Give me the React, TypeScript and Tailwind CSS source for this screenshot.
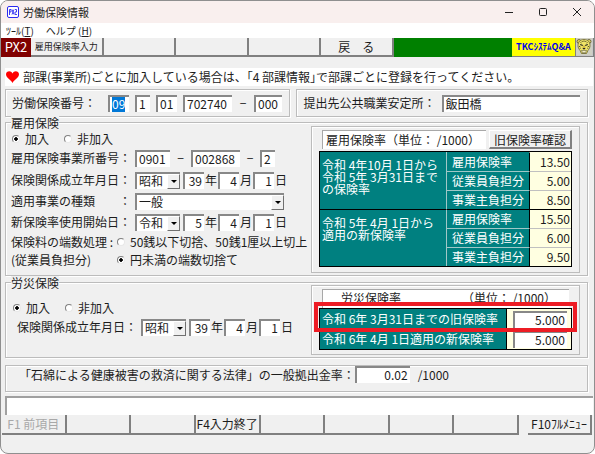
import { useEffect, useRef } from "react";
import type { ReactNode } from "react";

const boxStyle = "h-[17px] border-t-2 border-l-2 border-[#888888] bg-white px-[2px] text-[12px] leading-[14px] outline-none rounded-none"

function Field({ label, value, className }: { label: string, value: string, className: string }) {
    return <input aria-label={label} defaultValue={value} className={`${boxStyle} pb-[2px] ${className}`} />
}

function Combo({ label, options, className }: { label: string, options: string[], className: string }) {
    return (
        <div className={`relative ${className}`}>
            <select aria-label={label} className={`${boxStyle} block w-full appearance-none`}>
                {options.map((o) => <option key={o}>{o}</option>)}
            </select>
            <span className="pointer-events-none absolute top-[2px] right-0 flex h-[15px] w-[13px] items-center justify-center border border-t-white border-l-white border-r-[#707070] border-b-[#707070] bg-[#f0f0f0]">
                <svg width="6" height="3" viewBox="0 0 6 3"><path d="M0 0h6L3 3z" fill="#000" /></svg>
            </span>
        </div>
    )
}

function Radio({ name, label, checked }: { name: string, label: string, checked?: boolean }) {
    return (
        <label className="flex items-center gap-[5px] whitespace-nowrap">
            <input
                type="radio"
                name={name}
                defaultChecked={checked}
                className="h-[8px] w-[8px] shrink-0 appearance-none rounded-full border border-t-[#808080] border-l-[#808080] border-r-[#e8e8e8] border-b-[#e8e8e8] bg-white checked:bg-[radial-gradient(circle,#000_0_1.5px,#fff_2px)]"
            />
            {label}
        </label>
    )
}

function DateRow({ label, era, year, month, day }: { label: string, era: string, year: string, month: string, day: string }) {
    return (
        <div className="flex h-[20px] items-center">
            <span className="w-[124px] shrink-0">{label}：</span>
            <Combo label={`${label} 元号`} options={[era, era === "昭和" ? "平成" : "昭和"]} className="w-[45px]" />
            <Field label={`${label} 年`} value={year} className="ml-[3px] w-[21px] text-right" />
            <span className="w-[14px] text-center">年</span>
            <Field label={`${label} 月`} value={month} className="w-[21px] text-right" />
            <span className="w-[14px] text-center">月</span>
            <Field label={`${label} 日`} value={day} className="w-[21px] text-right" />
            <span className="w-[14px] text-center">日</span>
        </div>
    )
}

function Group({ title, className, children }: { title?: string, className: string, children: ReactNode }) {
    return (
        <fieldset className={`relative min-w-0 border border-[#bcbcbc] shadow-[inset_1px_1px_0_#fff,1px_1px_0_#fff] ${className}`}>
            {title && <legend className="absolute top-[-7px] left-[5px] bg-[#f0f0f0] leading-[14px]">{title}</legend>}
            {children}
        </fieldset>
    )
}

const rates = [
    {
        title: ["令和 4年10月 1日から", "令和 5年 3月31日まで", "の保険率"],
        rows: [["雇用保険率", "13.50"], ["従業員負担分", "5.00"], ["事業主負担分", "8.50"]],
    },
    {
        title: ["令和 5年 4月 1日から", "適用の新保険率"],
        rows: [["雇用保険率", "15.50"], ["従業員負担分", "6.00"], ["事業主負担分", "9.50"]],
    },
]

const accidentRates = [
    ["令和 6年 3月31日までの旧保険率", "5.000"],
    ["令和 6年 4月 1日適用の新保険率", "5.000"],
]

const toolButton = "flex-[72] min-w-0 border-r-2 border-b-2 border-[#808080] bg-[#f0f0f0] whitespace-nowrap"

function Leopard() {
    return (
        <svg width="16" height="17" viewBox="0 0 16 17" aria-hidden="true">
            <rect width="16" height="17" fill="#d0d0c4" />
            <circle cx="3" cy="3.500" r="2" fill="#e8d860" stroke="#55512d" strokeWidth=".8" />
            <circle cx="13" cy="3.500" r="2" fill="#e8d860" stroke="#55512d" strokeWidth=".8" />
            <path d="M8 1.500c4 0 6 2.500 6 6 0 2-.8 3.500-2 4.800L10.500 15.500h-5L4 12.300C2.800 11 2 9.500 2 7.500c0-3.500 2-6 6-6z" fill="#f0e468" stroke="#6b6530" strokeWidth=".8" />
            <path d="M8 2.500v1.500M6 3l.5 1M10 3l-.5 1M4.500 4.500l1 .5M11.500 4.500l-1 .5M3 8.500h1.200M13 8.500h-1.200M3.800 10.500l1-.5M12.200 10.500l-1-.5" stroke="#4d4823" strokeWidth=".9" />
            <path d="M4.200 6.500l2.600 1M11.800 6.500l-2.600 1" stroke="#222" strokeWidth="1.200" />
            <path d="M7 7.500h2l.5 2.500h-3z" fill="#d2b83f" />
            <path d="M6.300 10h3.400L8 11.800z" fill="#222" />
            <path d="M5.500 12.300l2.500.4 2.500-.4-1 2.400h-3z" fill="#fff8d0" stroke="#554" strokeWidth=".6" />
        </svg>
    )
}

export default function App() {
    const firstField = useRef<HTMLInputElement>(null)

    useEffect(() => {
        firstField.current?.focus()
        firstField.current?.select()
    }, [])

    return (
        <div className="flex min-h-screen w-full flex-col overflow-hidden rounded-lg border border-[#8f8f8f] bg-[#f0f0f0] font-['Noto_Sans_CJK_JP',sans-serif] text-[12px] leading-[14px] text-[#1c1c1c]">
            <header className="flex h-[22px] items-center bg-[#f9efee] pl-[6px]">
                <svg width="12" height="12" viewBox="0 0 12 12" aria-hidden="true">
                    <rect x=".5" y=".5" width="11" height="11" rx="1.5" fill="#fff" stroke="#2a2af0" />
                    <path d="M2.500 9V3.500h1.500v2.500h-1.500M5 3.500l2 5M7 3.500l-2 5M8 3.500h1.500v2.500h-1.500v2.500h2" fill="none" stroke="#2a2af0" strokeWidth=".9" />
                </svg>
                <h1 className="ml-[4px] flex-1 text-[11px]">労働保険情報</h1>
                <button aria-label="最小化" className="flex w-[34px] justify-center">
                    <svg width="8" height="8" viewBox="0 0 8 8"><path d="M0 4.500h8" stroke="#222" /></svg>
                </button>
                <button aria-label="最大化" className="flex w-[34px] justify-center">
                    <svg width="8" height="8" viewBox="0 0 8 8"><rect x=".5" y=".5" width="7" height="7" rx="1" fill="none" stroke="#222" /></svg>
                </button>
                <button aria-label="閉じる" className="flex w-[34px] justify-center">
                    <svg width="8" height="8" viewBox="0 0 8 8"><path d="M0 0l8 8M8 0L0 8" stroke="#222" /></svg>
                </button>
            </header>

            <nav className="flex h-[15px] items-center gap-[12px] bg-white pl-[5px] text-[10px]">
                <button>ﾂｰﾙ(<u>T</u>)</button>
                <button>ヘルプ (<u>H</u>)</button>
            </nav>

            <div className="flex h-[19px] text-[12px]">
                <span className="w-[30px] shrink-0 bg-[#800000] text-center text-[13px] leading-[18px] text-white">PX2</span>
                <button className={`${toolButton} text-[9px]`}>雇用保険率入力</button>
                <button aria-label="未使用" className={toolButton}></button>
                <button aria-label="未使用" className={toolButton}></button>
                <button aria-label="未使用" className={toolButton}></button>
                <button className={toolButton}>戻　る</button>
                <span className="flex-[121] bg-[#008000]"></span>
                <button className="w-[64px] shrink-0 border-r border-b border-[#808080] bg-[#ffff00] text-[9px] font-bold whitespace-nowrap text-[#0000f0]">TKCｼｽﾃﾑQ&amp;A</button>
                <button aria-label="TKC" className="flex w-[18px] shrink-0 justify-center border-r border-b border-[#808080] bg-[#c8c8c8]"><Leopard /></button>
            </div>

            <main className="mt-[11px] flex flex-col px-[4px]">
                <p className="mr-[-3px] flex h-[18px] items-center gap-[4px] bg-white pl-[1px] whitespace-nowrap">
                    <svg width="13" height="12" viewBox="0 0 13 12" aria-hidden="true"><path d="M6.500 12C5 9 0 7 0 3.300 0 0 5 -1 6.500 2.500 8 -1 13 0 13 3.300 13 7 8 9 6.500 12z" fill="#f00" /></svg>
                    部課(事業所)ごとに加入している場合は、｢4 部課情報｣で部課ごとに登録を行ってください。
                </p>

                <div className="mt-[3px] mr-[2px] flex gap-[6px]">
                    <Group className="h-[28px] flex-1 pl-[6px]">
                        <div className="flex h-full items-center">
                            <label htmlFor="number" className="w-[96px] shrink-0">労働保険番号：</label>
                            <input id="number" ref={firstField} defaultValue="09" className={`${boxStyle} w-[21px] pb-[2px] selection:bg-[#0078d7] selection:text-white`} />
                            <Field label="所掌" value="1" className="ml-[6px] w-[15px]" />
                            <Field label="管轄" value="01" className="ml-[6px] w-[21px]" />
                            <Field label="基幹番号" value="702740" className="ml-[6px] w-[49px]" />
                            <span className="w-[22px] text-center">−</span>
                            <Field label="枝番号" value="000" className="w-[28px]" />
                        </div>
                    </Group>
                    <Group className="h-[28px] flex-1 px-[7px]">
                        <div className="flex h-full items-center">
                            <label htmlFor="office" className="w-[138px] shrink-0">提出先公共職業安定所：</label>
                            <input id="office" defaultValue="飯田橋" className={`${boxStyle} min-w-0 flex-1 pb-[2px]`} />
                        </div>
                    </Group>
                </div>

                <Group title="雇用保険" className="mt-[5px] mr-[2px] flex h-[154px] justify-between pr-[7px] pl-[5px]">
                    <div className="flex flex-col pt-[7px]">
                        <div className="flex h-[18px] items-center gap-[15px] pl-[1px]">
                            <Radio name="employment" label="加入" checked />
                            <Radio name="employment" label="非加入" />
                        </div>
                        <div className="flex h-[20px] items-center">
                            <span className="w-[124px]">雇用保険事業所番号：</span>
                            <Field label="事業所番号1" value="0901" className="w-[35px]" />
                            <span className="w-[21px] text-center">−</span>
                            <Field label="事業所番号2" value="002868" className="w-[49px]" />
                            <span className="w-[20px] text-center">−</span>
                            <Field label="事業所番号3" value="2" className="w-[15px]" />
                        </div>
                        <div className="mt-[2px] flex flex-col gap-[1px]">
                            <DateRow label="保険関係成立年月日" era="昭和" year="39" month="4" day="1" />
                            <div className="flex h-[20px] items-center">
                                <span className="flex w-[120px] justify-between"><span>適用事業の種類</span><span>：</span></span>
                                <Combo label="適用事業の種類" options={["一般", "建設"]} className="ml-[4px] w-[149px]" />
                            </div>
                            <DateRow label="新保険率使用開始日" era="令和" year="5" month="4" day="1" />
                        </div>
                        <div className="flex h-[20px] items-center">
                            <span className="w-[106px] whitespace-nowrap">保険料の端数処理 :</span>
                            <Radio name="rounding" label="50銭以下切捨、50銭1厘以上切上" />
                        </div>
                        <div className="flex h-[16px] items-center">
                            <span className="w-[106px] whitespace-nowrap">(従業員負担分)</span>
                            <Radio name="rounding" label="円未満の端数切捨て" checked />
                        </div>
                    </div>

                    <div className="mt-[3px] h-[147px] w-[269px] shrink-0 border border-[#bcbcbc] px-[7px] pt-[3px] shadow-[inset_1px_1px_0_#fff]">
                        <div className="flex h-[19px] gap-[3px] pl-[3px]">
                            <span className="flex-1 border-t border-l border-[#a8a8a8] bg-white pl-[3px] leading-[17px] whitespace-nowrap">雇用保険率（単位： /1000）</span>
                            <button className="w-[83px] border-t border-r-2 border-b-2 border-l border-t-white border-r-[#808080] border-b-[#808080] border-l-white bg-[#f0f0f0] leading-[15px] whitespace-nowrap">旧保険率確認</button>
                        </div>
                        <table className="mt-[2px] w-full table-fixed border-separate border-spacing-0 border border-black bg-[#008080] text-white">
                            <colgroup><col className="w-[127px]" /><col /><col className="w-[42px]" /></colgroup>
                            {rates.map((block, b) => (
                                <tbody key={b}>
                                    {block.rows.map(([name, value], i) => (
                                        <tr key={name} className="h-[19px]">
                                            {i === 0 && (
                                                <th rowSpan={3} className={`border-r border-[#a0c8c8] pt-[7px] pl-[2px] text-left align-top leading-[12px] font-normal whitespace-nowrap ${b === 1 ? "border-t border-t-black" : ""}`}>
                                                    {block.title.map((line) => <div key={line}>{line}</div>)}
                                                </th>
                                            )}
                                            <td className={`border-t pl-[5px] whitespace-nowrap ${i > 0 ? "border-[#a0c8c8]" : b === 1 ? "border-black" : "border-transparent"}`}>{name}</td>
                                            <td className={`border-t border-l border-l-black bg-[#ffffe1] pr-[1px] text-right text-[#1c1c1c] ${i > 0 ? "border-t-[#c0c0c0]" : b === 1 ? "border-t-black" : "border-t-transparent"}`}>{value}</td>
                                        </tr>
                                    ))}
                                </tbody>
                            ))}
                        </table>
                    </div>
                </Group>

                <Group title="労災保険" className="mt-[6px] mr-[2px] flex h-[76px] justify-between pr-[7px] pl-[5px]">
                    <div className="pt-[16px]">
                        <div className="flex h-[18px] items-center gap-[15px] pl-[2px]">
                            <Radio name="accident" label="加入" checked />
                            <Radio name="accident" label="非加入" />
                        </div>
                        <div className="pl-[6px]">
                            <DateRow label="保険関係成立年月日" era="昭和" year="39" month="4" day="1" />
                        </div>
                    </div>

                    <div className="mt-[2px] h-[70px] w-[269px] shrink-0 border border-[#bcbcbc] px-[7px] pt-[3px] shadow-[inset_1px_1px_0_#fff]">
                        <div className="mx-[3px] flex h-[19px] justify-between border-t border-l border-[#a8a8a8] bg-white pr-[13px] pl-[18px] leading-[15px] whitespace-nowrap">
                            <span>労災保険率</span>
                            <span>（単位： /1000）</span>
                        </div>
                        <div className="relative">
                            <table className="w-full table-fixed border-separate border-spacing-0 border border-black bg-[#008080] text-white">
                                <colgroup><col className="w-[186px]" /><col /></colgroup>
                                <tbody>
                                    {accidentRates.map(([name, value]) => (
                                        <tr key={name} className="h-[20px]">
                                            <th className="pl-[2px] text-left font-normal whitespace-nowrap">{name}</th>
                                            <td className="border-l border-black bg-[#ffffe1] pr-[4px] pl-[6px] text-[#1c1c1c]">
                                                <input aria-label={name} defaultValue={value} className={`${boxStyle} block w-full pb-[2px] text-right`} />
                                            </td>
                                        </tr>
                                    ))}
                                </tbody>
                            </table>
                            <div className="pointer-events-none absolute inset-x-[-5px] top-[-6px] h-[30px] border-4 border-[#ed1c24]"></div>
                        </div>
                    </div>
                </Group>

                <Group className="mt-[7px] mr-[2px] h-[27px] pl-[13px]">
                    <div className="flex h-full items-center whitespace-nowrap">
                        <label htmlFor="asbestos">「石綿による健康被害の救済に関する法律」の一般拠出金率：</label>
                        <input id="asbestos" defaultValue="0.02" className={`${boxStyle} w-[55px] pb-[2px] text-right`} />
                        <span className="ml-[8px]">/1000</span>
                    </div>
                </Group>
                <output className="mt-[4px] mr-[-3px] block h-[19px] border-t-2 border-l-2 border-[#a0a0a0] bg-white"></output>
            </main>

            <footer className="flex h-[20px] gap-[9px] pr-[2px] pl-[1px]">
                <div className="flex flex-1">
                    <button disabled className={`${toolButton} text-[#a8a8a8]`}>F1 前項目</button>
                    <button aria-label="F2" className={toolButton}></button>
                    <button aria-label="F3" className={toolButton}></button>
                    <button className={toolButton}>F4入力終了</button>
                    <button aria-label="F5" className={toolButton}></button>
                    <button aria-label="F6" className={toolButton}></button>
                    <button aria-label="F7" className={toolButton}></button>
                    <button aria-label="F8" className={toolButton}></button>
                </div>
                <button className="w-[64px] border-r-2 border-b-2 border-[#808080] whitespace-nowrap">F10ﾌﾙﾒﾆｭｰ</button>
            </footer>
        </div>
    )
}
